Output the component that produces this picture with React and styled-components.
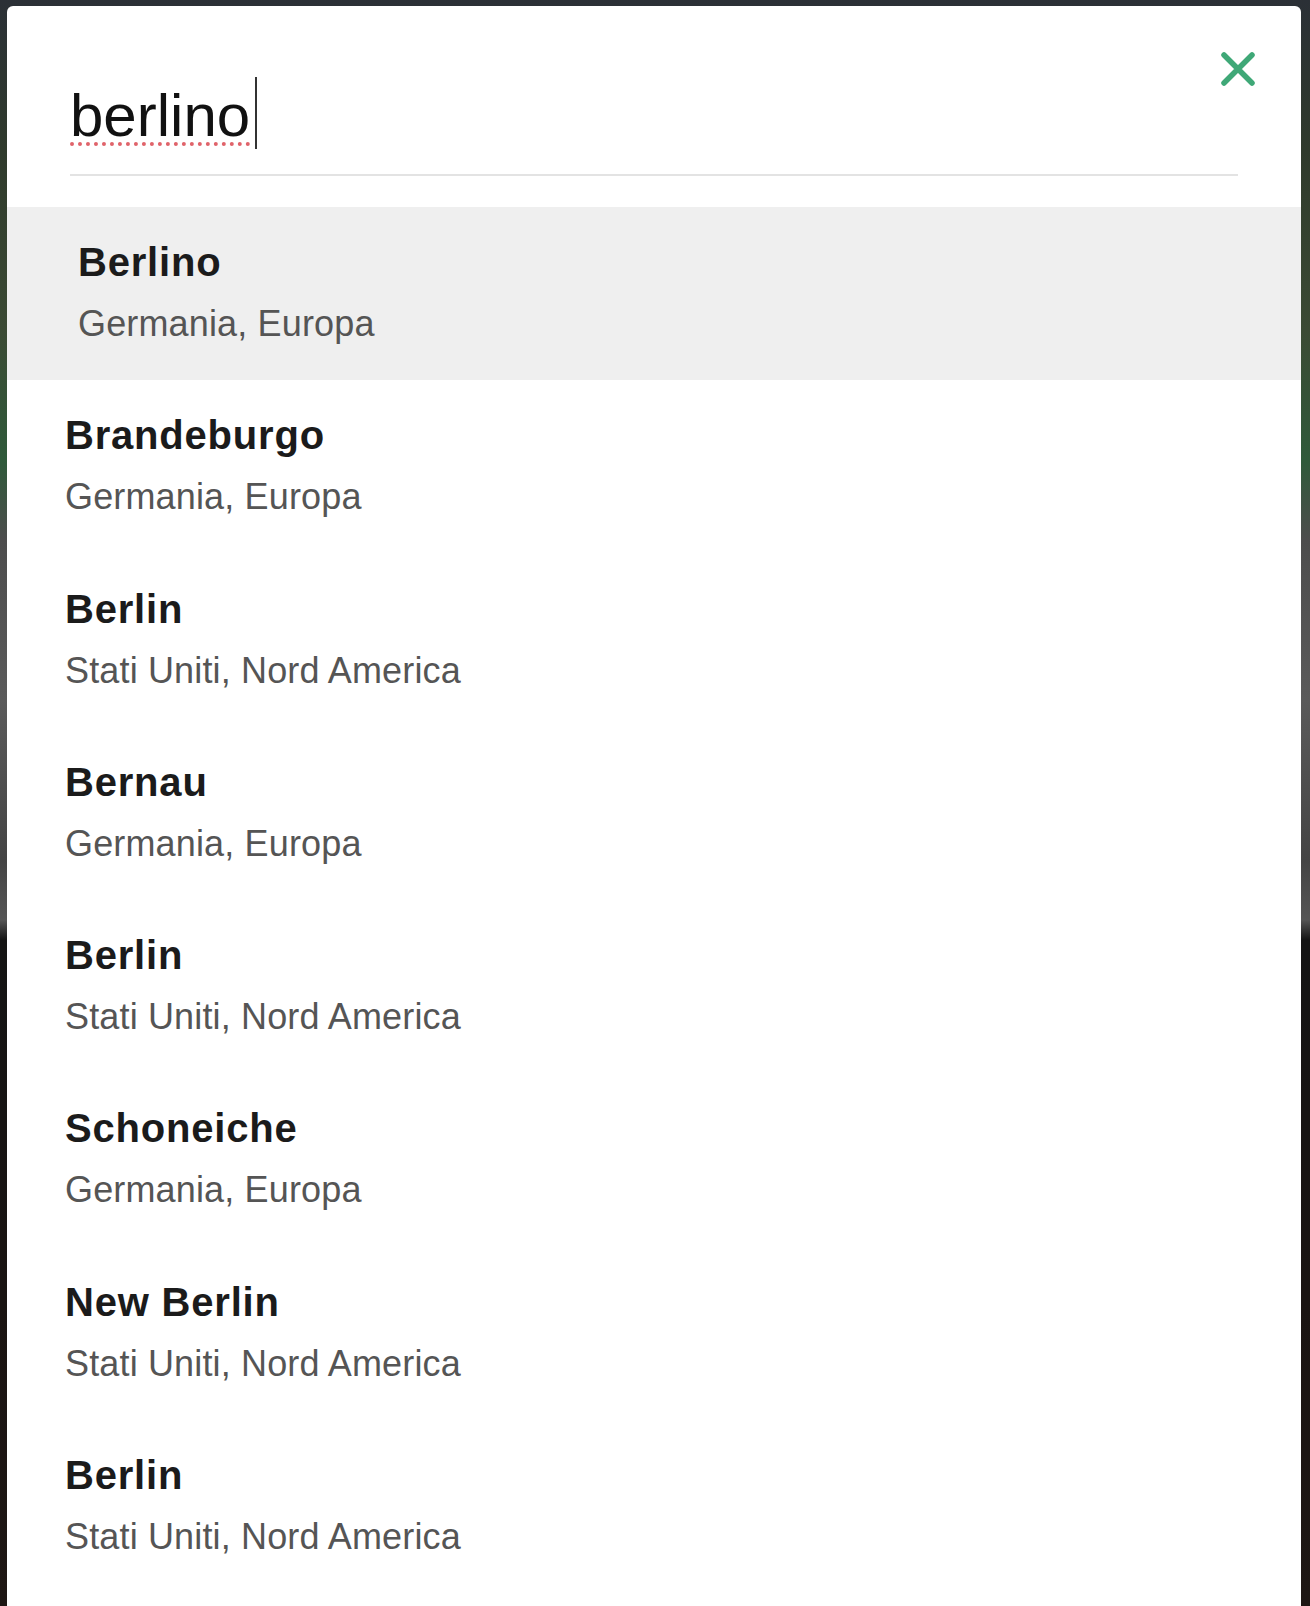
import React from "react";
import styled, { createGlobalStyle } from "styled-components";

const GlobalStyle = createGlobalStyle`
  html, body {
    margin: 0;
    padding: 0;
  }
  body {
    font-family: "Liberation Sans", Arial, sans-serif;
    background: #1c1f22;
  }
`;

const Backdrop = styled.div`
  min-height: 1606px;
  padding: 6px 9px 0 7px;
  box-sizing: border-box;
  overflow: hidden;
  background: linear-gradient(
    to bottom,
    #2b3036 0px,
    #2f3a2c 150px,
    #3b4a34 330px,
    #2f5a3a 460px,
    #4d4d4d 540px,
    #5a5a5a 700px,
    #444 860px,
    #555 920px,
    #141414 940px,
    #1a1412 1300px,
    #1e1714 1606px
  );
`;

const Modal = styled.div`
  position: relative;
  background: #fff;
  border-radius: 6px 6px 0 0;
  min-height: 1600px;
`;

const Header = styled.div`
  padding: 74px 63px 0;
`;

const Field = styled.div`
  display: flex;
  align-items: center;
  padding-bottom: 22px;
  border-bottom: 2px solid #e3e3e3;
`;

const Query = styled.span`
  font-size: 60px;
  line-height: 1.2;
  color: #111;
  text-decoration: underline dotted #e0636a;
  text-decoration-thickness: 4px;
  text-underline-offset: 6px;
`;

const Caret = styled.span`
  display: inline-block;
  width: 2px;
  height: 72px;
  margin-left: 5px;
  margin-top: -6px;
  background: #333;
`;

const CloseButton = styled.button`
  position: absolute;
  top: 46px;
  right: 46px;
  width: 34px;
  height: 34px;
  padding: 0;
  border: 0;
  background: none;
  cursor: pointer;
  svg {
    display: block;
  }
`;

const Results = styled.ul`
  list-style: none;
  margin: 31px 0 0;
  padding: 0;
`;

const Row = styled.li`
  padding: 31px 40px 35px ${(p) => (p.$active ? "71px" : "58px")};
  background: ${(p) => (p.$active ? "#efefef" : "transparent")};
  height: 173.3px;
  box-sizing: border-box;
`;

const Title = styled.div`
  font-size: 40px;
  font-weight: 700;
  line-height: 48px;
  letter-spacing: 0.8px;
  color: #1b1b1b;
`;

const Place = styled.div`
  margin-top: 16px;
  font-size: 36px;
  line-height: 43px;
  letter-spacing: 0.15px;
  color: #555;
`;

const results = [
  { name: "Berlino", place: "Germania, Europa" },
  { name: "Brandeburgo", place: "Germania, Europa" },
  { name: "Berlin", place: "Stati Uniti, Nord America" },
  { name: "Bernau", place: "Germania, Europa" },
  { name: "Berlin", place: "Stati Uniti, Nord America" },
  { name: "Schoneiche", place: "Germania, Europa" },
  { name: "New Berlin", place: "Stati Uniti, Nord America" },
  { name: "Berlin", place: "Stati Uniti, Nord America" },
];

export default function App() {
  return (
    <>
      <GlobalStyle />
      <Backdrop>
        <Modal>
          <Header>
            <Field>
              <Query>berlino</Query>
              <Caret />
            </Field>
          </Header>
          <CloseButton aria-label="Chiudi">
            <svg width="34" height="34" viewBox="0 0 34 34">
              <path
                d="M3 3 L31 31 M31 3 L3 31"
                stroke="#3fa877"
                strokeWidth="5.5"
                strokeLinecap="round"
              />
            </svg>
          </CloseButton>
          <Results>
            {results.map((r, i) => (
              <Row key={i} $active={i === 0}>
                <Title>{r.name}</Title>
                <Place>{r.place}</Place>
              </Row>
            ))}
          </Results>
        </Modal>
      </Backdrop>
    </>
  );
}
